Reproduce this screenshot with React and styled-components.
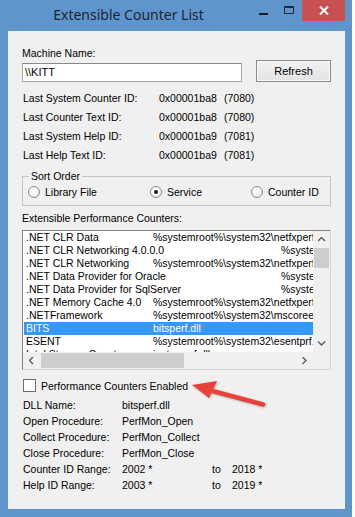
import React from 'react';
import styled, { createGlobalStyle } from 'styled-components';

const GlobalStyle = createGlobalStyle`
  html,
  body {
    margin: 0;
    padding: 0;
    background: #ffffff;
    overflow: hidden;
  }

  body {
    font-family: 'Liberation Sans', Arial, sans-serif;
    font-size: 10.5px;
    color: #000;
  }
`;

const Window = styled.div`
  width: 352px;
  height: 517px;
  background: #5d95cc;
  display: flex;
  flex-direction: column;
  box-sizing: border-box;
`;

const TitleBar = styled.div`
  height: 31px;
  display: flex;
  align-items: flex-start;
  flex-shrink: 0;
`;

const Title = styled.div`
  flex: 1;
  padding: 5px 0 0 7px;
  text-align: center;
  font-family: 'Noto Sans', 'Open Sans', sans-serif;
  font-size: 14px;
  line-height: 20px;
  color: #1f2530;
`;

const Controls = styled.div`
  display: flex;
  margin-right: 7px;
`;

const CtrlButton = styled.div`
  width: 26px;
  height: 21px;
  display: flex;
  align-items: center;
  justify-content: center;
`;

const CloseButton = styled(CtrlButton)`
  width: 43px;
  background: #c75050;
`;

const MinGlyph = styled.div`
  width: 9px;
  height: 2px;
  margin-top: 6px;
  background: #1d1d1d;
`;

const MaxGlyph = styled.div`
  width: 10px;
  height: 8px;
  margin-top: -2px;
  box-sizing: border-box;
  border: 1px solid #2a2a2a;
  border-top-width: 2px;
`;

const Client = styled.div`
  flex: 1;
  min-width: 0;
  margin: 0 7px 8px 8px;
  padding: 16px 14px 0;
  background: #f0f0f0;
  display: flex;
  flex-direction: column;
`;

const Label = styled.div`
  line-height: 13px;
  white-space: nowrap;
  margin-top: ${(p) => p.$mt || 0}px;
`;

const MachineRow = styled.div`
  display: flex;
  align-items: flex-end;
  height: 22px;
`;

const TextBox = styled.div`
  width: 220px;
  height: 19px;
  box-sizing: border-box;
  border: 1px solid #a6a6a6;
  border-top-color: #8a8a8a;
  background: #fff;
  padding-left: 2px;
  line-height: 17px;
  font-size: 11px;
`;

const Button = styled.div`
  margin-left: auto;
  width: 75px;
  height: 22px;
  box-sizing: border-box;
  border: 1px solid #8a8a8a;
  background: linear-gradient(#f2f2f2, #e3e3e3);
  box-shadow: inset 0 0 0 1px #fafafa;
  display: flex;
  align-items: center;
  justify-content: center;
  font-size: 11px;
`;

const InfoGrid = styled.div`
  display: grid;
  grid-template-columns: 136px 65px 1fr;
  grid-auto-rows: 19px;
  align-items: center;
  margin-top: 6px;
  padding-left: 1px;
  white-space: nowrap;
`;

const GroupBox = styled.fieldset`
  margin: 6px 0 0;
  padding: 2px 4px 7px 5px;
  border: 1px solid #c4c4c4;
  min-width: 0;
  min-inline-size: 0;
`;

const Legend = styled.legend`
  margin-left: 1px;
  padding: 0 2px;
  line-height: 13px;
`;

const RadioRow = styled.div`
  display: grid;
  grid-template-columns: 122px 101px minmax(0, 1fr);
  height: 13px;
  align-items: center;
`;

const RadioItem = styled.div`
  display: flex;
  align-items: center;
  gap: 5px;
  white-space: nowrap;
`;

const RadioCircle = styled.div`
  flex: 0 0 12px;
  width: 12px;
  height: 12px;
  box-sizing: border-box;
  border-radius: 50%;
  border: 1px solid #8a8a8a;
  background: radial-gradient(circle at 40% 35%, #ffffff 30%, #dedede 100%);
  display: flex;
  align-items: center;
  justify-content: center;

  &::after {
    content: '';
    width: 4px;
    height: 4px;
    border-radius: 50%;
    background: ${(p) => (p.$checked ? '#1a1a1a' : 'transparent')};
  }
`;

const ListBox = styled.div`
  margin-top: 5px;
  height: 140px;
  box-sizing: border-box;
  border: 1px solid #828282;
  border-right-color: #d6d6d6;
  border-bottom-color: #d6d6d6;
  display: grid;
  grid-template-columns: minmax(0, 1fr) 17px;
  grid-template-rows: minmax(0, 1fr) 17px;
  background: #fff;
`;

const ListRows = styled.div`
  overflow: hidden;
  min-width: 0;
  padding-left: 1px;
`;

const ListRow = styled.div`
  display: flex;
  height: 13px;
  line-height: 13px;
  padding-left: 2px;
  white-space: nowrap;
  font-size: 10.5px;
  background: ${(p) => (p.$selected ? '#3399ff' : 'transparent')};
  color: ${(p) => (p.$selected ? '#fff' : '#000')};
`;

const NameCell = styled.div`
  flex: 0 0 ${(p) => (p.$wide ? 255 : 127)}px;
`;

const ScrollTrack = styled.div`
  background: #f0f0f0;
  min-width: 0;
  display: flex;
  flex-direction: ${(p) => (p.$horizontal ? 'row' : 'column')};
`;

const ScrollArrow = styled.div`
  flex: 0 0 17px;
  display: flex;
  align-items: center;
  justify-content: center;
`;

const Thumb = styled.div`
  flex-shrink: 0;
  background: #cdcdcd;
  ${(p) =>
    p.$horizontal
      ? `width: ${p.$size}px; margin: 1px 0 1px 1px;`
      : `height: ${p.$size}px; margin: 0 1px;`}
`;

const Spacer = styled.div`
  flex: 1;
`;

const Corner = styled.div`
  background: #f0f0f0;
`;

const CheckRow = styled.div`
  position: relative;
  display: flex;
  align-items: center;
  gap: 5px;
  height: 13px;
  margin-top: 9px;
  padding-left: 1px;
  white-space: nowrap;
`;

const CheckBox = styled.div`
  width: 13px;
  height: 13px;
  box-sizing: border-box;
  border: 1px solid #6e6e6e;
  background: #fff;
`;

const Pointer = styled.svg`
  position: absolute;
  left: 163px;
  top: -5px;
  overflow: visible;
  filter: drop-shadow(1px 1px 1px rgba(0, 0, 0, 0.25));
`;

const DetailGrid = styled.div`
  display: grid;
  grid-template-columns: 99px 90px 20px 1fr;
  grid-auto-rows: 16px;
  align-items: center;
  margin-top: 5px;
  padding-left: 1px;
  white-space: nowrap;
`;

const Chevron = ({ dir }) => {
  const pts = {
    up: '0,4 3.5,0.5 7,4',
    down: '0,0.5 3.5,4 7,0.5',
    left: '4,0 0.5,3.5 4,7',
    right: '0.5,0 4,3.5 0.5,7',
  }[dir];
  const horiz = dir === 'left' || dir === 'right';
  return (
    <svg width={horiz ? 5 : 8} height={horiz ? 8 : 5} viewBox={horiz ? '0 0 5 8' : '0 0 8 5'}>
      <polyline points={pts} fill="none" stroke="#606060" strokeWidth="1.5" />
    </svg>
  );
};

const SR = '%systemroot%\\system32\\';

const counters = [
  { name: '.NET CLR Data', lib: SR + 'netfxperf.dll' },
  { name: '.NET CLR Networking 4.0.0.0', lib: SR + 'netfxperf.dll', wide: true },
  { name: '.NET CLR Networking', lib: SR + 'netfxperf.dll' },
  { name: '.NET Data Provider for Oracle', lib: SR + 'netfxperf.dll', wide: true },
  { name: '.NET Data Provider for SqlServer', lib: SR + 'netfxperf.dll', wide: true },
  { name: '.NET Memory Cache 4.0', lib: SR + 'netfxperf.dll' },
  { name: '.NETFramework', lib: SR + 'mscoree.dll' },
  { name: 'BITS', lib: 'bitsperf.dll', selected: true },
  { name: 'ESENT', lib: SR + 'esentprf.dll' },
  { name: 'Intel Storage Counters', lib: 'iastorperf.dll' },
];

const info = [
  ['Last System Counter ID:', '0x00001ba8', '(7080)'],
  ['Last Counter Text ID:', '0x00001ba8', '(7080)'],
  ['Last System Help ID:', '0x00001ba9', '(7081)'],
  ['Last Help Text ID:', '0x00001ba9', '(7081)'],
];

const details = [
  ['DLL Name:', 'bitsperf.dll'],
  ['Open Procedure:', 'PerfMon_Open'],
  ['Collect Procedure:', 'PerfMon_Collect'],
  ['Close Procedure:', 'PerfMon_Close'],
  ['Counter ID Range:', '2002 *', 'to', '2018 *'],
  ['Help ID Range:', '2003 *', 'to', '2019 *'],
];

const sortOptions = [
  { label: 'Library File' },
  { label: 'Service', checked: true },
  { label: 'Counter ID' },
];

export default function App() {
  return (
    <>
      <GlobalStyle />
      <Window>
        <TitleBar>
          <Title>Extensible Counter List</Title>
          <Controls>
            <CtrlButton>
              <MinGlyph />
            </CtrlButton>
            <CtrlButton>
              <MaxGlyph />
            </CtrlButton>
            <CloseButton>
              <svg width="10" height="9" viewBox="0 0 10 9">
                <path d="M1 0.5 L9 8.5 M9 0.5 L1 8.5" stroke="#fff" strokeWidth="2" />
              </svg>
            </CloseButton>
          </Controls>
        </TitleBar>

        <Client>
          <Label>Machine Name:</Label>
          <MachineRow>
            <TextBox>{'\\\\KITT'}</TextBox>
            <Button>Refresh</Button>
          </MachineRow>

          <InfoGrid>
            {info.map(([label, hex, dec]) => (
              <React.Fragment key={label}>
                <div>{label}</div>
                <div>{hex}</div>
                <div>{dec}</div>
              </React.Fragment>
            ))}
          </InfoGrid>

          <GroupBox>
            <Legend>Sort Order</Legend>
            <RadioRow>
              {sortOptions.map((o) => (
                <RadioItem key={o.label}>
                  <RadioCircle $checked={o.checked} />
                  {o.label}
                </RadioItem>
              ))}
            </RadioRow>
          </GroupBox>

          <Label $mt={6}>Extensible Performance Counters:</Label>
          <ListBox>
            <ListRows>
              {counters.map((c) => (
                <ListRow key={c.name} $selected={c.selected}>
                  <NameCell $wide={c.wide}>{c.name}</NameCell>
                  <div>{c.lib}</div>
                </ListRow>
              ))}
            </ListRows>
            <ScrollTrack>
              <ScrollArrow>
                <Chevron dir="up" />
              </ScrollArrow>
              <Thumb $size={20} />
              <Spacer />
              <ScrollArrow>
                <Chevron dir="down" />
              </ScrollArrow>
            </ScrollTrack>
            <ScrollTrack $horizontal>
              <ScrollArrow>
                <Chevron dir="left" />
              </ScrollArrow>
              <Thumb $horizontal $size={143} />
              <Spacer />
              <ScrollArrow>
                <Chevron dir="right" />
              </ScrollArrow>
            </ScrollTrack>
            <Corner />
          </ListBox>

          <CheckRow>
            <CheckBox />
            Performance Counters Enabled
            <Pointer width="85" height="36" viewBox="0 0 85 36">
              <path d="M18 14.5 L78 30.5" stroke="#e8413b" strokeWidth="4.5" strokeLinecap="round" />
              <polygon points="7,11 32,7 24,24" fill="#e8413b" />
            </Pointer>
          </CheckRow>

          <DetailGrid>
            {details.map(([label, v1, to, v2]) => (
              <React.Fragment key={label}>
                <div>{label}</div>
                <div>{v1}</div>
                <div>{to || ''}</div>
                <div>{v2 || ''}</div>
              </React.Fragment>
            ))}
          </DetailGrid>
        </Client>
      </Window>
    </>
  );
}
